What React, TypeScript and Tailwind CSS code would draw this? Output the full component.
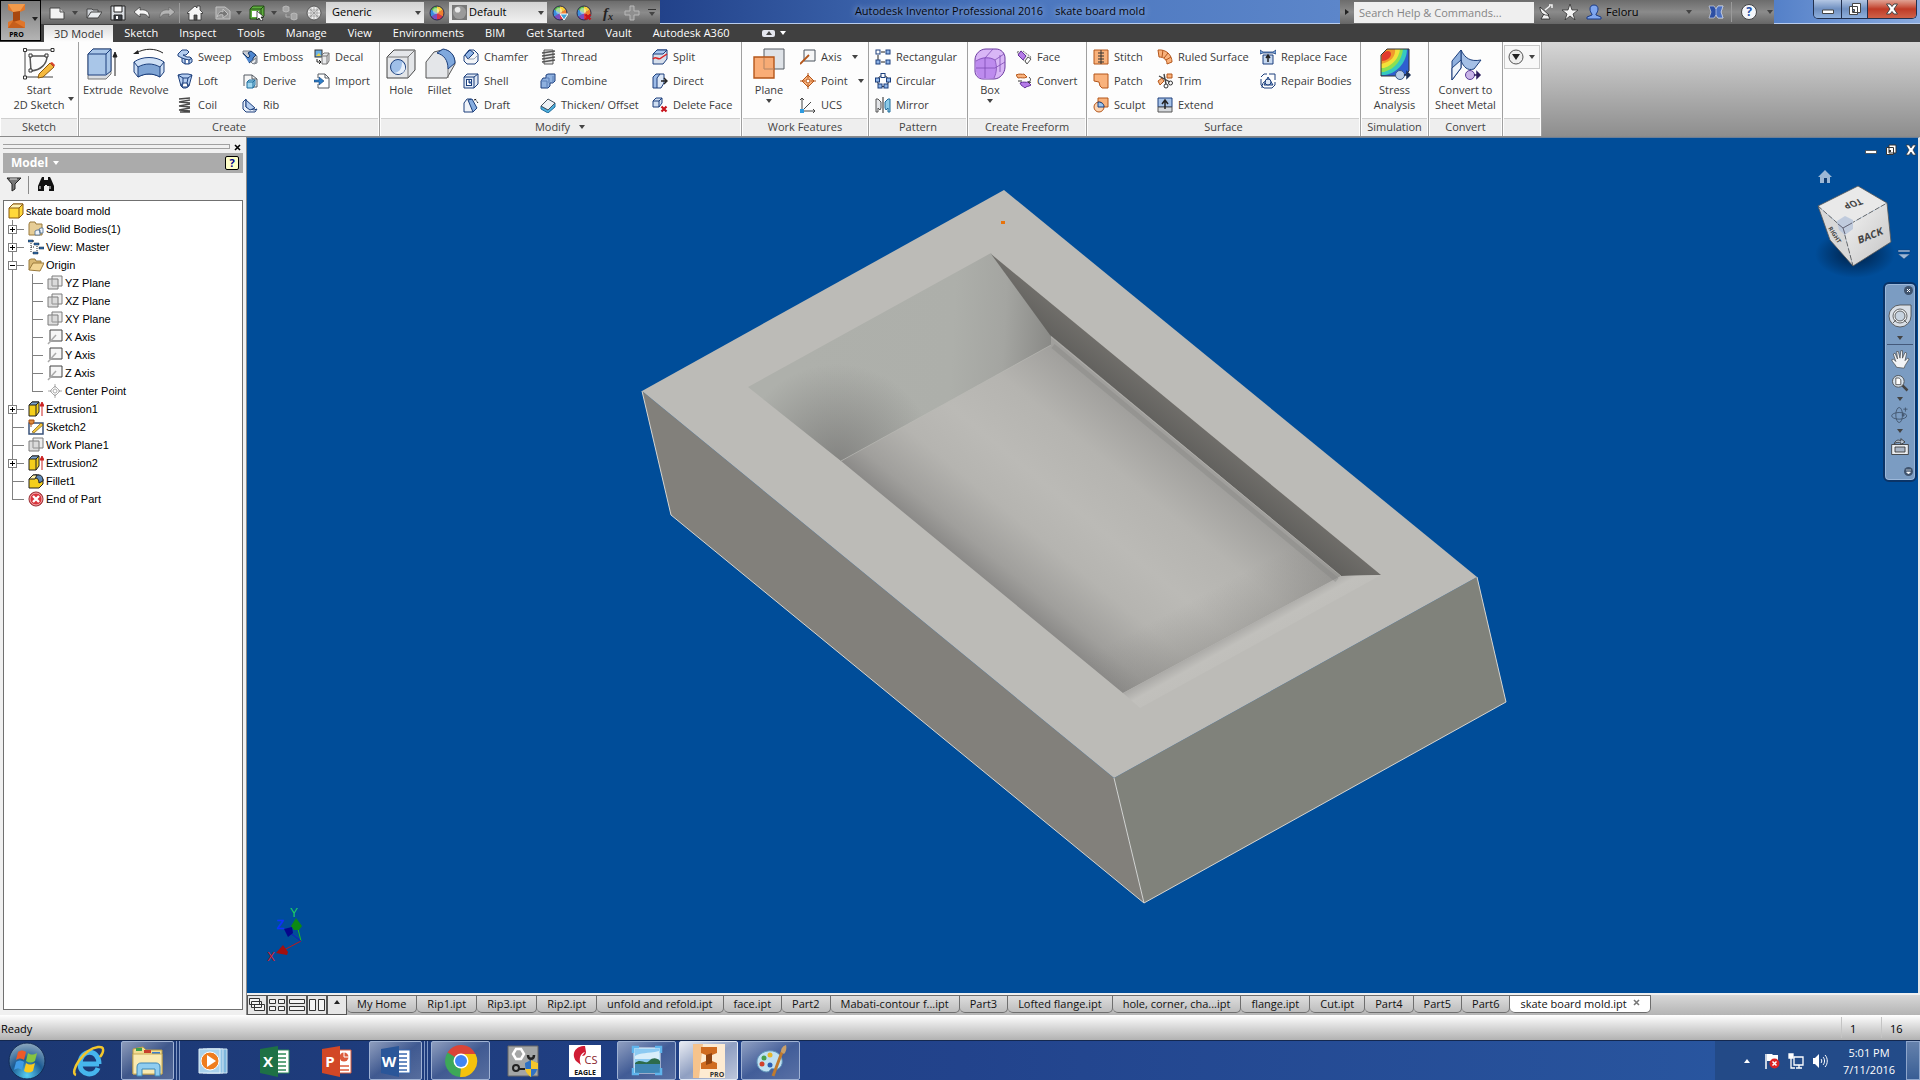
import React from 'react';
import type { ReactNode } from 'react';

const navy = '#1c3f7c';
const sky = '#b4cdf0';
const rust = '#b4561a';
const peach = '#f9b27c';

function Wheel() {
  return (
    <g>
      <path d="M8 8V1a7 7 0 0 1 6 3.5z" fill="#f8d038" />
      <path d="M8 8l6-3.5a7 7 0 0 1 0 7z" fill="#f08030" />
      <path d="M8 8l6 3.5A7 7 0 0 1 8 15z" fill="#d8344a" />
      <path d="M8 8v7a7 7 0 0 1-6-3.5z" fill="#7a4fc0" />
      <path d="M8 8l-6 3.5a7 7 0 0 1 0-7z" fill="#3a8fe0" />
      <path d="M8 8L2 4.5A7 7 0 0 1 8 1z" fill="#5fbf48" />
      <circle cx="8" cy="8" r="7" fill="none" stroke="#2b2b4a" />
      <circle cx="7" cy="6" r="3" fill="#fff" fillOpacity=".45" />
    </g>
  );
}

/* 16px drawings */
const icons: Record<string, ReactNode> = {
  sweep: (
    <g fill={sky} stroke={navy}>
      <path d="M1 5l4-4h5l2 2-3 3H6l4 2h3l2 2v3l-3 2H8l-3-2V9L1 7z" />
      <path d="M5 9l3 1 4 1 3-2M8 10v5M12 11v4" fill="none" />
      <path d="M9 11h2v3H9z" fill="#fff" stroke="none" />
    </g>
  ),
  loft: (
    <g stroke={navy} fill={sky}>
      <path d="M1 2l4-1 6 0 4 1-3 11-3 2H6l-2-2z" />
      <path d="M1 2l5 3h5l4-3M6 5v4l-2 4M11 5l-1 5 2 3" fill="none" />
      <path d="M6 10h4l1 4H5z" fill="#fff" />
    </g>
  ),
  coil: (
    <g stroke="#4a4a4a" fill="none" strokeWidth="1.3">
      <path d="M2 2l11-1M2 5l11-2M2 5l11 1M2 9l11-2M2 9l11 1M2 13l11-2M2 13l11 1M3 15h10" />
    </g>
  ),
  emboss: (
    <g>
      <path d="M1 2h7l7 5v7l-3 1-6-6-5-4z" fill="#c8ccd2" stroke="#7a8089" />
      <path d="M1 4l5 5 2-2-2-3 3-2 5 4-3 3v2l-4 3" fill="#4d86cf" stroke="#163767" />
      <path d="M9 13l5-4v4l-3 2z" fill="#e8eaed" stroke="#7a8089" />
    </g>
  ),
  derive: (
    <g>
      <path d="M2 13V2h8l5 4v8h-3" fill="#f6f6f6" stroke="#555b63" />
      <path d="M10 2v4h5" fill="none" stroke="#555b63" />
      <path d="M5 9l2-2h6v5l-2 3H5z" fill="#9fd6ee" stroke="#1f6c9c" />
      <path d="M5 9h6v6M11 9l2-2" fill="none" stroke="#1f6c9c" />
    </g>
  ),
  rib: (
    <g stroke={navy} fill={sky}>
      <path d="M1 5l3-3v8l8 3 3-1-2 3H4l-3-3z" fill="#e9f0fa" />
      <path d="M4 3l9 8-5 2-4-3z" />
    </g>
  ),
  decal: (
    <g>
      <rect x="1" y="1" width="7" height="7" fill="#6db1e6" stroke="#333" />
      <path d="M2 7l3-3 2 3z" fill="#e8d24b" />
      <path d="M3 10v3h3M5 11l2 2-2 2" fill="none" stroke="#222" />
      <path d="M8 6l2-2h5v8l-2 3H8z" fill="#e9eaec" stroke="#777" />
      <path d="M8 7h5v8M13 7l2-3" fill="none" stroke="#777" />
    </g>
  ),
  import: (
    <g>
      <path d="M4 5V1h7l4 4v10H4v-4" fill="#fff" stroke="#555b63" />
      <path d="M11 1v4h4" fill="none" stroke="#555b63" />
      <path d="M0 7h5V4l5 4-5 4V9H0z" fill="#2e7fc9" stroke="#123e73" strokeWidth=".6" />
    </g>
  ),
  chamfer: (
    <g stroke={navy}>
      <path d="M1 7l5-6h5l4 4v7l-3 3H4l-3-3z" fill="#f3f5f8" />
      <path d="M2 6l5-5 4 3-6 6z" fill="#8fb4e6" />
      <path d="M5 10l6 0 4-4" fill="none" stroke="#9aa5b5" />
    </g>
  ),
  shell: (
    <g stroke={navy}>
      <path d="M1 4l3-3h11v10l-4 4H1z" fill="#dfe8f5" />
      <path d="M1 4h10v11M11 4l4-3" fill="none" />
      <rect x="3.5" y="6.5" width="5" height="6" fill="#fff" />
      <path d="M6 7v3h3" fill="#4d7cc5" />
    </g>
  ),
  draft: (
    <g stroke={navy}>
      <path d="M1 6l3-4h4l4 10-2 3H1z" fill="#f0f3f8" />
      <path d="M5 3l4-1 5 9-4 4z" fill="#86ade0" />
      <path d="M11 3l3-1M12 2l3 4" stroke="#222" strokeDasharray="2 1" />
    </g>
  ),
  thread: (
    <g stroke="#555" fill="#e6e6e6">
      <path d="M4 1h9v14H4z" />
      <path d="M2 4l13-2M2 7l13-2M2 10l13-2M2 13l13-2" strokeWidth="1.4" />
    </g>
  ),
  combine: (
    <g stroke={navy}>
      <path d="M6 2l2-1h7v7l-2 2h-3v3l-2 2H1V8l2-3h3z" fill="#8fb1df" />
      <path d="M6 5l3 0v5M1 8h6v7M13 3v7" fill="none" stroke="#5a7fb8" />
    </g>
  ),
  thicken: (
    <g stroke="#44505e">
      <path d="M1 9l7 4 7-7v4l-7 6-7-4z" fill="#4fb0dd" stroke="#1f6c9c" />
      <path d="M1 9l7-7 7 4-7 7z" fill="#eef1f4" />
    </g>
  ),
  split: (
    <g>
      <path d="M1 5l4-4h10v9l-4 5H1z" fill="#d5deeb" stroke={navy} />
      <path d="M1 5h10l4-4H5z" fill="#a9c6ee" stroke={navy} />
      <path d="M1 10c3-4 5 2 8-1l6-4" fill="none" stroke="#d22" strokeWidth="1.5" />
    </g>
  ),
  direct: (
    <g stroke={navy}>
      <path d="M1 4l3-3h4v11l-3 3H1z" fill="#9dbbe7" />
      <path d="M5 5l3-4h4v9l-3 5H5z" fill="#dce7f6" />
      <path d="M9 8h5M12 5l3 3-3 3" fill="none" stroke="#222" strokeWidth="1.4" />
    </g>
  ),
  deleteFace: (
    <g>
      <path d="M1 4l3-3h6v5l-3 4H1z" fill="#cfdef2" stroke={navy} />
      <path d="M1 4h6v6M7 4l3-3" fill="none" stroke={navy} />
      <path d="M9.5 9.5l5 5M14.5 9.5l-5 5" stroke="#c8141c" strokeWidth="2.2" />
    </g>
  ),
  axis: (
    <g>
      <path d="M4 1h11v11H4z" fill="#f6f7f8" stroke="#4b525c" />
      <path d="M0 15L9 6" stroke={rust} strokeWidth="1.8" />
    </g>
  ),
  point: (
    <g>
      <path d="M8 2l6 6-6 6-6-6z" fill={peach} stroke={rust} />
      <path d="M8 0v5M8 11v5M0 8h5M11 8h5" stroke={rust} />
      <circle cx="8" cy="8" r="2" fill="#fff" stroke={rust} />
    </g>
  ),
  ucs: (
    <g>
      <path d="M2 1v13h13M2 14l9-9M0 3l2-2 2 2M13 12l2 2-2 2" fill="none" stroke="#444" />
      <rect x="0" y="12" width="4" height="4" fill="#2e9be0" />
    </g>
  ),
  rectangular: (
    <g stroke={navy}>
      <path d="M6 3h4M3 6v5M6 13h4" stroke="#222" />
      <rect x="1" y="1" width="4" height="4" fill="#fff" />
      <rect x="11" y="1" width="4" height="4" fill="#8fb4e6" />
      <rect x="1" y="11" width="4" height="4" fill="#8fb4e6" />
      <rect x="11" y="11" width="4" height="4" fill="#8fb4e6" />
    </g>
  ),
  circular: (
    <g stroke={navy}>
      <circle cx="8" cy="8" r="5.5" fill="none" stroke="#222" />
      <rect x="6" y="0.5" width="4" height="4" fill="#fff" />
      <rect x="0.5" y="5" width="4" height="4" fill="#8fb4e6" />
      <rect x="11.5" y="5" width="4" height="4" fill="#8fb4e6" />
      <rect x="3" y="11" width="4" height="4" fill="#8fb4e6" />
      <rect x="9" y="11" width="4" height="4" fill="#8fb4e6" />
    </g>
  ),
  mirror: (
    <g>
      <path d="M1 2h2l3 3v6l-1 2-2-2v4H1z" fill="#e3e5e8" stroke="#555" />
      <path d="M15 2h-2l-3 3v6l1 2 2-2v4h2z" fill="#8ccbe8" stroke="#1f6c9c" />
      <path d="M8 0v16" stroke="#222" />
    </g>
  ),
  face: (
    <g>
      <path d="M1 3l6-1 8 6-4 6-3-2z" fill="#eee" stroke="#777" strokeDasharray="2 1" />
      <path d="M5 2l5 5-3 4-5-5z" fill="#b57be8" stroke="#63309a" />
      <path d="M12 8l3 2-4 5-2-3z" fill="#fff" stroke="#555" />
    </g>
  ),
  convert: (
    <g>
      <path d="M0 2c4-2 6 0 8-1l3 3c-3 2-6 0-9 1z" fill={peach} stroke={rust} />
      <path d="M4 10c4-2 6 0 8-1l3 3c-3 2-5 1-6 3-2-2-4-2-5-5z" fill="#b57be8" stroke="#63309a" />
      <path d="M13 4c2 2 2 3 0 5M12 8l1 2 2-1M2 8h4" fill="none" stroke="#333" />
    </g>
  ),
  stitch: (
    <g>
      <path d="M1 1h14v14H1z" fill={peach} stroke={rust} />
      <path d="M8 1v14" stroke="#333" />
      <path d="M5 4h6M5 7h6M5 10h6M5 13h6" stroke="#333" />
    </g>
  ),
  patch: <path d="M1 1h14v14H9l-2-2-1-4-5-1z" fill={peach} stroke={rust} />,
  sculpt: (
    <g>
      <path d="M5 1h10v9H5z" fill={peach} stroke={rust} />
      <circle cx="6" cy="10" r="5" fill="#fdd3b0" stroke={rust} />
      <path d="M5 5c5 0 6 3 6 5H5z" fill="#9ac4ee" stroke={navy} />
    </g>
  ),
  ruled: (
    <g fill={peach} stroke={rust}>
      <path d="M1 1c8-1 14 5 14 12l-5 2C10 11 7 8 2 8z" />
      <path d="M6 1L5 8M11 4L7 9M14 8l-5 3" fill="none" />
    </g>
  ),
  trim: (
    <g>
      <path d="M10 1h5v4h-5z" fill={peach} stroke={rust} />
      <path d="M1 8l4-3 2 3-4 4z" fill={peach} stroke={rust} />
      <path d="M7 1l2 10M2 3l11 6" stroke="#444" strokeWidth="1.4" />
      <circle cx="9" cy="13" r="2" fill="none" stroke="#333" />
      <circle cx="13.5" cy="10" r="2" fill="none" stroke="#333" />
    </g>
  ),
  extend: (
    <g>
      <path d="M1 1h14v9H1z" fill="#a7c3e8" stroke={navy} />
      <path d="M1 10h14v5H1z" fill="#d4d7db" stroke="#555" />
      <path d="M8 12V4M5 7l3-4 3 4" fill="none" stroke="#222" strokeWidth="1.5" />
    </g>
  ),
  replace: (
    <g>
      <path d="M3 6h10v9H3z" fill="#c6d8f0" stroke={navy} />
      <path d="M0 1l3 2h10l3-2v4l-3-1H3L0 5z" fill="#7ea9de" stroke={navy} strokeWidth=".8" />
      <path d="M8 13V7M6 9l2-3 2 3" fill="none" stroke="#222" strokeWidth="1.5" />
    </g>
  ),
  repair: (
    <g stroke={navy} fill="none">
      <path d="M1 4l3-3h3M9 1h6v6M1 6v6l3 3h8l3-3V9" />
      <path d="M4 12l4-8 5 8z" fill="#a9c6ee" />
      <circle cx="8" cy="9" r="3" fill="#dfe9f7" />
      <path d="M2 15c0-4 1-6 4-7" />
    </g>
  ),
  /* model browser */
  part: (
    <g stroke="#8a5a10">
      <path d="M1 5l4-4h10v10l-4 4H1z" fill="#ffd83a" />
      <path d="M5 1h10l-4 4H1z" fill="#fff3b8" />
      <path d="M11 5v10" fill="none" />
    </g>
  ),
  solids: (
    <g>
      <path d="M1 3l1-2h5l1 2h6v11H1z" fill="#e6cd96" stroke="#9a7a3c" />
      <path d="M7 10l2-1h3v5H7zM11 8l2-1h2v5h-3z" fill="#eef3f9" stroke="#49698f" strokeWidth=".8" />
    </g>
  ),
  views: (
    <g>
      <path d="M1 2h5M3 2v12M3 8h4M9 5v8" stroke="#222" strokeDasharray="1 1" />
      <path d="M0 1h5v2H0zM6 4h5v2H6zM11 8h5v2h-5zM5 13h5v2H5z" fill="#2f6cae" stroke="#123" strokeWidth=".5" />
    </g>
  ),
  folder: (
    <g stroke="#9a7a3c">
      <path d="M1 13V3l2-1h4l1 2h5v3" fill="#d9b873" />
      <path d="M1 13l4-7h11l-4 8z" fill="#f2d594" />
    </g>
  ),
  plane: (
    <g stroke="#7c7c7c">
      <path d="M5 1h10v10H5z" fill="#ededed" />
      <path d="M1 4h10v10H1z" fill="#d4d4d4" fillOpacity=".8" />
      <path d="M5 4v7h6" fill="none" stroke="#9c9c9c" />
    </g>
  ),
  axisGray: (
    <g>
      <path d="M3 1h12v11H3z" fill="#f6f6f6" stroke="#444" />
      <path d="M1 15L9 6" stroke="#aaa" strokeWidth="1.5" />
    </g>
  ),
  centerPoint: (
    <g stroke="#aaa" fill="none">
      <path d="M8 3l5 5-5 5-5-5zM8 1v4M8 11v4M1 8h4M11 8h4" />
      <circle cx="8" cy="8" r="2" />
    </g>
  ),
  extrusion: (
    <g>
      <path d="M1 4l3-3h7v10l-3 4H1z" fill="#f5cf1c" stroke="#222" />
      <path d="M4 1h7L8 4H1z" fill="#7ea6cf" stroke="#222" />
      <path d="M8 4v11" fill="none" stroke="#222" />
      <path d="M14 15V2M12 5l2-4 2 4z" stroke="#c22" fill="#c22" />
    </g>
  ),
  sketch: (
    <g>
      <path d="M1 4h14v11H1z" fill="#fff" stroke="#39527a" strokeWidth="1.5" />
      <path d="M4 13l9-9 2 2-9 8z" fill="#f3c63e" stroke="#7a5a12" strokeWidth=".7" />
      <path d="M1 1h5v2L5 5H2L1 3zM3 5v3" fill="#e08a3c" stroke="#a24d12" />
    </g>
  ),
  filletPart: (
    <g stroke="#222">
      <path d="M1 6l4-4h6l4 4v5l-4 4H1z" fill="#f5cf1c" />
      <path d="M7 2h4c3 0 4 3 4 6l-4 2c0-3-1-5-4-5z" fill="#5d86b5" />
      <path d="M1 6h6l2-4H5z" fill="#fff2a8" />
    </g>
  ),
  end: (
    <g>
      <circle cx="8" cy="8" r="7" fill="#d8343c" stroke="#8c2026" />
      <circle cx="8" cy="8" r="6" fill="none" stroke="#f3b0b2" />
      <path d="M5 5l6 6M11 5l-6 6" stroke="#fff" strokeWidth="2.4" />
    </g>
  ),
  /* quick access */
  newFile: (
    <g>
      <path d="M1 3h10l4 4v7H1z" fill="#f2f2f2" stroke="#444" />
      <path d="M11 3v4h4" fill="#ccc" stroke="#555" />
    </g>
  ),
  open: (
    <g stroke="#444">
      <path d="M1 13V4h5l1 1h5v3" fill="#cfd3d8" />
      <path d="M1 13l4-6h11l-4 6z" fill="#e9ecef" />
    </g>
  ),
  save: (
    <g stroke="#222">
      <path d="M1 1h14v14H1z" fill="#d9dde2" />
      <path d="M4 1h8v6H4z" fill="#fff" />
      <path d="M4 10h8v5H4z" fill="#3a3f46" />
      <path d="M6 11h2v3H6z" fill="#fff" stroke="none" />
    </g>
  ),
  undo: <path d="M0 7l6-5v3c6-1 10 2 9 8-2-4-5-4-9-4v3z" fill="#f6f6f6" stroke="#333" strokeWidth=".7" />,
  redo: <path d="M16 7l-6-5v3C4 4 0 7 1 13c2-4 5-4 9-4v3z" fill="#b4b4b4" stroke="#666" strokeWidth=".7" />,
  home: (
    <g fill="#f6f6f6" stroke="#333" strokeWidth=".8">
      <path d="M0 8l8-7 2 2V1h3v4l3 3-1 1-1-1v7H2V8L1 9z" />
      <path d="M7 10h3v5H7z" fill="#555" />
    </g>
  ),
  update: (
    <g fill="#9a9a9a" stroke="#c2c2c2">
      <path d="M1 2h9l5 4v8H1z" />
      <path d="M2 12c2-6 4-6 6-5V4l5 5-5 4v-3c-2-1-4 0-6 2z" fill="#777" />
    </g>
  ),
  select: (
    <g>
      <path d="M1 4l3-3h11v10l-3 3H1z" fill="#5fae3e" stroke="#224d14" />
      <path d="M1 4h11v10M12 4l3-3" fill="none" stroke="#224d14" />
      <path d="M3 6h7v6H3z" fill="#fff" />
      <path d="M8 6v9l2-2 2 3 2-1-2-3h3z" fill="#fff" stroke="#111" strokeWidth=".7" />
    </g>
  ),
  link: (
    <g fill="#a5a5a5" stroke="#c6c6c6" strokeWidth=".7">
      <path d="M1 2l3-1 3 1v4L4 7 1 6zM9 9l3-1 3 1v5l-3 1-3-1z" />
      <path d="M4 9v3h4" fill="none" />
    </g>
  ),
  texture: (
    <g>
      <circle cx="8" cy="8" r="7" fill="#f0f0f0" stroke="#555" />
      <path d="M2 5h12M1 8h14M2 11h12M5 2v12M8 1v14M11 2v12M3 3l10 10M13 3L3 13" stroke="#8a8a8a" strokeWidth=".6" />
    </g>
  ),
  wheel: <Wheel />,
  wheelApply: (
    <g>
      <Wheel />
      <path d="M8 9h8l-4 6z" fill="#3fa2d6" stroke="#fff" />
    </g>
  ),
  wheelClear: (
    <g>
      <Wheel />
      <path d="M9.5 9.5l5 5M14.5 9.5l-5 5" stroke="#c8141c" strokeWidth="2.4" />
    </g>
  ),
  plus: <path d="M6 1h4v5h5v4h-5v5H6v-5H1V6h5z" fill="#8f8f8f" stroke="#b8b8b8" />,
  satellite: (
    <g fill="#f2f2f2" stroke="#222" strokeWidth=".8">
      <path d="M2 3c0 6 4 9 9 8zM6 10l-3 5h9l-2-4" />
      <path d="M7 6l5-4M11 1h3v3" fill="none" stroke="#f2f2f2" strokeWidth="1.5" />
    </g>
  ),
  star: <path d="M8 0l2 6h6l-5 4 2 6-5-4-5 4 2-6-5-4h6z" fill="#f4f4f4" stroke="#333" strokeWidth=".8" />,
  user: <path d="M8 1c3 0 4 2 4 4s-1 4-2 5v1l5 2v2H1v-2l5-2v-1C5 9 4 7 4 5s1-4 4-4z" fill="#7fa6ef" stroke="#1a3a86" />,
  exchange: (
    <g stroke="#dfe4f0" strokeWidth=".6">
      <path d="M1 2h5l2 3 2-3h5l-2 6 2 6h-5l-2-3-2 3H1l2-6z" fill="#2d4fa3" />
      <path d="M8 5l2-3h5l-2 6 2 6h-5l-2-3V5z" fill="#4a6fc0" />
    </g>
  ),
  help: (
    <g>
      <circle cx="8" cy="8" r="7.5" fill="#f4f6fa" stroke="#444" />
      <text x="8" y="12" textAnchor="middle" fontSize="12" fontWeight="700" fill="#2450a8" fontFamily="Open Sans">?</text>
    </g>
  ),
  flag: (
    <g>
      <path d="M2 1v15" stroke="#fff" strokeWidth="1.5" />
      <path d="M3 1h5l1 1h5v7H9L8 8H3z" fill="#fff" />
      <circle cx="10.5" cy="10.5" r="5" fill="#d22" />
      <path d="M8.5 8.5l4 4M12.5 8.5l-4 4" stroke="#fff" strokeWidth="1.5" />
    </g>
  ),
  network: (
    <g stroke="#fff" fill="none" strokeWidth="1.3">
      <path d="M6 4h9v8H6zM8 15h6M11 12v3M3 5v10h4" />
      <path d="M1 1h4v4H1z" fill="#fff" />
    </g>
  ),
  sound: (
    <g>
      <path d="M1 5h2l4-4v14l-4-4H1z" fill="#fff" />
      <path d="M9 6c1 1 1 3 0 4M11 4c2 2 2 6 0 8M13 2c3 3 3 9 0 12" fill="none" stroke="#fff" />
    </g>
  ),
  filter: (
    <g stroke="#222">
      <path d="M1 2h14l-6 6v5l-3 2V8z" fill="#777" />
      <path d="M4 3h7" stroke="#ddd" />
    </g>
  ),
  binoculars: (
    <g>
      <path d="M3 3l1-2h2v3h4V1h2l1 2 3 7v5h-5v-5H9V9H7v1H6v5H0v-5z" fill="#111" />
      <path d="M2 10v3M12 10v3" stroke="#eee" />
    </g>
  ),
};

/* 32px drawings */
const bigIcons: Record<string, ReactNode> = {
  start: (
    <g>
      <path d="M2 2h28M2 2v27h28" fill="none" stroke="#444" />
      <path d="M7 8h17c0 8-6 14-16 15z" fill="#fafafa" stroke="#555" strokeWidth="1.5" />
      <path d="M.5.5h3v3h-3zM28 .5h3v3h-3zM.5 28h3v3h-3zM6 6h3v3H6zM22 6h3v3h-3zM6 21h3v3H6z" fill="#fff" stroke="#333" />
      <path d="M16 26l11-11 4 4-11 10-5 1z" fill="#f5b93e" stroke="#8a5a10" />
      <path d="M27 15l4 4 1-2-3-3z" fill="#d8442c" />
    </g>
  ),
  extrude: (
    <g>
      <path d="M1 6l5-5h18v25l-5 5H1z" fill="#d9dde2" stroke="#777" />
      <path d="M1 6l5-5h18v22l-5 4H1z" fill="#a9c6e8" stroke={navy} />
      <path d="M19 6v20M19 6l5-5M1 6h18" fill="none" stroke={navy} />
      <path d="M28 28V6M26 9l2-5 2 5z" stroke="#222" fill="#222" />
    </g>
  ),
  revolve: (
    <g>
      <path d="M1 14c8-6 22-6 30 0v10l-4 5c-7-4-15-4-22 0l-4-5z" fill="#cfe0f5" stroke={navy} />
      <path d="M5 19c7-4 15-4 22 0v10c-7-4-15-4-22 0z" fill="#7fa4d4" stroke={navy} />
      <path d="M1 14l4 5M31 14l-4 5" stroke={navy} />
      <path d="M3 5C12 0 22 0 30 5" fill="none" stroke="#222" />
      <path d="M0 6l5-4 1 4z" fill="#222" />
    </g>
  ),
  hole: (
    <g>
      <path d="M2 9l7-7h21v20l-7 8H2z" fill="#e4e6e9" stroke="#444" />
      <path d="M2 9h21v21M23 9l7-7" fill="none" stroke="#777" />
      <circle cx="13" cy="19" r="7.5" fill="#9fbfe8" stroke={navy} />
      <path d="M8 25c6 0 9-4 9-11 5 4 4 11-3 12z" fill="#e6effb" />
    </g>
  ),
  fillet: (
    <g>
      <path d="M2 14l8-10 8-2h4c6 2 9 7 9 14l-8 14H2z" fill="#e4e6e9" stroke="#555" />
      <path d="M13 5l6-4c7 1 12 6 12 14l-7 6c0-9-4-14-11-16z" fill="#7fa8dd" stroke={navy} />
      <path d="M24 21v9" stroke="#777" />
    </g>
  ),
  plane: (
    <g>
      <path d="M11 1h20v20H11z" fill="#dfe3e8" stroke="#555b63" />
      <path d="M1 9h20v21H1z" fill="#f9a468" fillOpacity=".9" stroke={rust} strokeWidth="1.4" />
      <path d="M11 10v11h10" fill="none" stroke="#b98a6a" />
    </g>
  ),
  box: (
    <g>
      <path d="M1 12c0-6 5-11 11-11h10c5 0 9 4 9 9v9c0 6-5 12-11 12H9c-5 0-8-4-8-8z" fill="#d9b6f6" stroke="#6b3aa0" />
      <path d="M2 13c6-5 14-5 19-1 2 6 2 12-1 18-6 1-10 1-15 0-4-6-4-12-3-17z" fill="#bd8bee" />
      <path d="M2 20h19l10-6M11 10v20M21 12c2 6 2 12-1 18M2 13c6-4 14-4 19-1l9-6M11 10l8-9M26 7v17" fill="none" stroke="#7f4cb4" strokeWidth=".8" />
    </g>
  ),
  stress: (
    <g>
      <path d="M2 7l6-6h22v22l-5 5H2z" fill="#2f5fd0" />
      <path d="M2 7l6-6h20c0 12-9 24-22 26H2z" fill="#35c8c0" />
      <path d="M2 7l6-6h16c-1 11-8 20-19 23H2z" fill="#8be052" />
      <path d="M2 7l6-6h13c-1 9-7 16-16 19H2z" fill="#f3e13a" />
      <path d="M2 7l6-6h8c1 7-4 13-14 15z" fill="#f19a2c" />
      <path d="M3 7c3-5 9-5 9-1s-5 7-9 7z" fill="#e23a2c" />
      <path d="M2 7l6-6h22v22l-5 5H2z" fill="none" stroke="#333" />
      <circle cx="21" cy="27" r="4.500" fill="#b8cce6" stroke="#3a5a88" />
      <path d="M25 27h4M28 24l3 3-3 3z" stroke="#1b2f55" strokeWidth="1.5" fill="#1b2f55" />
    </g>
  ),
  sheet: (
    <g>
      <path d="M11 2c4 8 9 12 20 10l-7 9c-7 2-10-2-13-8z" fill="#a5c0e6" stroke={navy} />
      <path d="M2 13l9-11v18l-9 12z" fill="#8fb0de" stroke={navy} />
      <path d="M2 20l9-8v8l-9 12z" fill="#eef4fb" stroke={navy} />
      <circle cx="20" cy="27" r="4.500" fill="#c9b4e8" stroke="#5a3c96" />
      <path d="M24 27h4M27 24l3 3-3 3z" stroke="#2e1d5c" strokeWidth="1.5" fill="#2e1d5c" />
    </g>
  ),
};

const Icon = ({ name }: { name: string }) => (
  <svg className="size-4 shrink-0" viewBox="0 0 16 16" aria-hidden="true">
    {icons[name]}
  </svg>
);

const Caret = ({ className = 'text-[#444]' }: { className?: string }) => (
  <svg className={`h-1 w-2 shrink-0 ${className}`} viewBox="0 0 8 4" aria-hidden="true">
    <path d="M1 0h6L4 4z" fill="currentColor" />
  </svg>
);

const CmdButton = ({ icon, label, menu }: { icon: string; label: string; menu?: boolean }) => (
  <button className="flex h-6 items-center gap-[5px] pl-[5px] whitespace-nowrap">
    <Icon name={icon} />
    <span>{label}</span>
    {menu && <span className="pl-1"><Caret /></span>}
  </button>
);

const Column = ({ width = '', items }: { width?: string; items: [string, string, boolean?][] }) => (
  <div className={`flex shrink-0 flex-col pt-[3px] ${width}`}>
    {items.map(([icon, label, menu]) => (
      <CmdButton key={label} icon={icon} label={label} menu={menu} />
    ))}
  </div>
);

const BigButton = ({ icon, label, width, menu }: { icon: string; label: string; width: string; menu?: boolean }) => (
  <button className={`flex shrink-0 flex-col items-center pt-[6px] leading-[15px] ${width}`}>
    <svg className="size-8" viewBox="0 0 32 32" aria-hidden="true">{bigIcons[icon]}</svg>
    <span className="pt-[2px] whitespace-pre">{label}</span>
    {menu && <span className="flex h-2 items-center"><Caret /></span>}
  </button>
);

const Panel = ({ title, width, menu, children }: { title: string; width: string; menu?: boolean; children?: ReactNode }) => (
  <section className={`flex shrink-0 flex-col border-r border-[#a0a0a0] bg-[#fdfdfd] px-px ${width}`}>
    <div className="flex h-[76px]">{children}</div>
    <div className="flex h-[18px] items-center justify-center gap-2 border-t border-[#cfcfcf] bg-[#eeeeee] pb-px text-[#444]">
      {title}
      {menu && <Caret />}
    </div>
  </section>
);

const Divider = () => <span className="h-5 w-px shrink-0 bg-[#9a9a9a]" />;

const ToolButton = ({ icon, label, className = 'w-[25px]' }: { icon: string; label: string; className?: string }) => (
  <button aria-label={label} className={`flex h-full shrink-0 items-center justify-center ${className}`}>
    <Icon name={icon} />
  </button>
);

const Combo = ({ label, value, ball }: { label: string; value: string; ball?: boolean }) => (
  <label className="relative flex h-[21px] w-[98px] shrink-0 items-center bg-linear-to-b from-[#d2d2d2] to-[#f1f1f1] text-black">
    {ball && (
      <svg className="absolute left-[3px] size-[15px]" viewBox="0 0 16 16" aria-hidden="true">
        <rect width="16" height="16" fill="#777" />
        <circle cx="8" cy="8" r="7" fill="#9a9a9a" />
        <circle cx="6" cy="5" r="3" fill="#e8e8e8" />
      </svg>
    )}
    <select aria-label={label} className={`h-full w-full appearance-none outline-none ${ball ? 'pl-5' : 'pl-[6px]'}`}>
      <option>{value}</option>
    </select>
    <span className="pointer-events-none absolute right-[2px]"><Caret /></span>
  </label>
);

const TitleBar = () => (
  <header className="flex h-6 items-stretch bg-[#404040] text-[11px]">
    <div className="flex shrink-0 items-center border-t border-[#5a5a5a] bg-linear-to-b from-[#6c6c6c] via-[#8b8b8b] to-[#666] pl-11">
      <ToolButton icon="newFile" label="New" />
      <span className="flex w-3 justify-center"><Caret /></span>
      <ToolButton icon="open" label="Open" />
      <ToolButton icon="save" label="Save" className="w-6" />
      <ToolButton icon="undo" label="Undo" className="w-6" />
      <ToolButton icon="redo" label="Redo" />
      <Divider />
      <ToolButton icon="home" label="Home" className="w-[30px]" />
      <ToolButton icon="update" label="Update" />
      <span className="flex w-2 justify-center"><Caret /></span>
      <ToolButton icon="select" label="Select" className="w-[27px]" />
      <span className="flex w-2 justify-center"><Caret /></span>
      <ToolButton icon="link" label="Links" className="w-6" />
      <ToolButton icon="texture" label="Material" className="w-6" />
      <Combo label="Material" value="Generic" />
      <ToolButton icon="wheel" label="Appearance browser" />
      <Combo label="Appearance" value="Default" ball />
      <ToolButton icon="wheelApply" label="Adjust" />
      <ToolButton icon="wheelClear" label="Clear" className="w-6" />
      <button aria-label="Parameters" className="w-6 font-['Liberation_Serif',serif] text-[15px] leading-5 font-bold text-[#222] italic">
        f<sub className="text-[10px]">x</sub>
      </button>
      <ToolButton icon="plus" label="Add" className="w-6" />
      <button aria-label="Customize" className="flex w-4 flex-col items-center gap-[2px]">
        <span className="h-px w-2 bg-[#333]" />
        <Caret />
      </button>
    </div>
    <h1 className="flex min-w-0 flex-1 items-center justify-center gap-3 overflow-hidden border-b border-[#b9cdee] bg-linear-to-r from-[#22428a] via-[#4a75bd] to-[#5c86ca] whitespace-nowrap text-[#05070c]">
      <span className="text-shadow-[0_0_6px_#c6d8f5]">Autodesk Inventor Professional 2016</span>
      <span className="text-shadow-[0_0_6px_#c6d8f5]">skate board mold</span>
    </h1>
    <div className="flex w-[434px] shrink-0 items-center bg-linear-to-b from-[#6c6c6c] via-[#8b8b8b] to-[#666]">
      <button aria-label="Collapse search" className="flex w-[14px] justify-center">
        <span className="-rotate-90"><Caret className="text-[#222]" /></span>
      </button>
      <input aria-label="Search" placeholder="Search Help &amp; Commands..." className="h-[21px] w-[180px] bg-[#efefef] pl-[5px] text-black outline-none placeholder:text-[#858585]" />
      <ToolButton icon="satellite" label="Communication Center" className="w-6" />
      <ToolButton icon="star" label="Favorites" className="w-6" />
      <button className="flex flex-1 items-center gap-1 pl-1 text-black">
        <Icon name="user" />
        <span className="flex-1 text-left">Feloru</span>
        <Caret />
      </button>
      <span className="w-2" />
      <ToolButton icon="exchange" label="Exchange Apps" className="w-[30px]" />
      <Divider />
      <ToolButton icon="help" label="Help" className="w-[34px]" />
      <span className="flex w-2 justify-start"><Caret /></span>
    </div>
    <div className="flex w-[146px] shrink-0 items-start justify-end border-b border-[#b9cdee] bg-linear-to-r from-[#5480c8] to-[#8aabdf] pr-[3px]">
      <div className="flex h-[19px] overflow-hidden rounded-b-[5px] border border-t-0 border-[#22304e]">
        <button aria-label="Minimize" className="flex w-7 items-center justify-center border-r border-[#22304e] bg-linear-to-b from-[#b4c7e4] via-[#6f8fc0] to-[#8fb0dd]">
          <svg className="size-4" viewBox="0 0 16 16"><path d="M2.5 9h11v3.500h-11z" fill="#fff" stroke="#444" /></svg>
        </button>
        <button aria-label="Restore" className="flex w-[26px] items-center justify-center border-r border-[#22304e] bg-linear-to-b from-[#b4c7e4] via-[#6f8fc0] to-[#8fb0dd]">
          <svg className="size-4" viewBox="0 0 16 16"><path d="M5.500 2.500h8v9h-8zM2.500 5.500h8v8h-8z" fill="#fff" stroke="#444" /><path d="M5.500 8.500h2v2h-2z" fill="#6f8fc0" stroke="#444" /></svg>
        </button>
        <button aria-label="Close" className="flex w-12 items-center justify-center bg-linear-to-b from-[#e0a294] via-[#bf3a26] to-[#cf6148]">
          <svg className="size-4" viewBox="0 0 16 16"><path d="M2.500 3h3.500l2 2.500L10 3h3.500l-3.500 5 3.500 5H10l-2-2.500L6 13H2.500L6 8z" fill="#fff" stroke="#444" /></svg>
        </button>
      </div>
    </div>
  </header>
);

const ribbonTabs = ['Sketch', 'Inspect', 'Tools', 'Manage', 'View', 'Environments', 'BIM', 'Get Started', 'Vault', 'Autodesk A360'];

const RibbonTabs = () => (
  <nav className="flex h-[18px] items-stretch gap-px bg-[#404040] pl-11 text-[11px] leading-[15px] text-white">
    <button className="mt-px bg-linear-to-b from-[#dcdcdc] to-[#fdfdfd] px-[10px] text-[#333]">3D Model</button>
    {ribbonTabs.map((tab) => (
      <button key={tab} className="px-[10px] pb-px">{tab}</button>
    ))}
    <button aria-label="Minimize ribbon" className="ml-[22px] flex items-center gap-1">
      <span className="flex h-[7px] w-[13px] items-center justify-center rounded-xs bg-[#e4e6ee]">
        <span className="rotate-180"><Caret /></span>
      </span>
      <Caret className="text-white" />
    </button>
  </nav>
);

const AppButton = () => (
  <button className="absolute top-0 left-0 flex h-[41px] w-[41px] items-start border border-black bg-linear-to-b from-[#7c7c7c] to-[#b4b4b4] pl-[6px]">
    <span className="flex flex-col items-center">
      <svg className="h-[29px] w-[19px]" viewBox="0 0 19 29" aria-hidden="true">
        <path d="M1 3h17v6l-5 2v8l5 2v6H1v-6l5-2v-8L1 9z" fill="#e0762a" />
        <path d="M6 11l7-2v10l-7 2z" fill="#a8480f" />
        <path d="M1 3l17 0-5 7-7 1z" fill="#f29a4a" />
        <path d="M1 27l5-7 12 7z" fill="#c65f1c" />
      </svg>
      <span className="text-[7px] leading-[9px] font-bold">PRO</span>
    </span>
    <span className="flex h-9 items-center pl-[5px]"><Caret className="text-[#222]" /></span>
  </button>
);

const Ribbon = () => (
  <div className="flex h-[95px] overflow-hidden border-b border-[#8a8a8a] bg-linear-to-b from-[#d6d6d6] to-[#8e8e8e] text-[11px] text-[#3b3b3b]">
    <Panel title="Sketch" width="w-[79px]">
      <div className="relative flex flex-1 justify-center">
        <BigButton icon="start" label={'Start\n2D Sketch'} width="w-[68px]" />
        <span className="absolute top-[55px] right-[2px]"><Caret /></span>
      </div>
    </Panel>
    <Panel title="Create" width="w-[301px]">
      <BigButton icon="extrude" label="Extrude" width="w-[46px]" />
      <BigButton icon="revolve" label="Revolve" width="w-[46px]" />
      <Column width="w-[65px]" items={[['sweep', 'Sweep'], ['loft', 'Loft'], ['coil', 'Coil']]} />
      <Column width="w-[72px]" items={[['emboss', 'Emboss'], ['derive', 'Derive'], ['rib', 'Rib']]} />
      <Column items={[['decal', 'Decal'], ['import', 'Import']]} />
    </Panel>
    <Panel title="Modify" width="w-[362px]" menu>
      <BigButton icon="hole" label="Hole" width="w-10" />
      <BigButton icon="fillet" label="Fillet" width="w-[37px]" />
      <Column width="w-[77px]" items={[['chamfer', 'Chamfer'], ['shell', 'Shell'], ['draft', 'Draft']]} />
      <Column width="w-[112px]" items={[['thread', 'Thread'], ['combine', 'Combine'], ['thicken', 'Thicken/ Offset']]} />
      <Column items={[['split', 'Split'], ['direct', 'Direct'], ['deleteFace', 'Delete Face']]} />
    </Panel>
    <Panel title="Work Features" width="w-[127px]">
      <BigButton icon="plane" label="Plane" width="w-[52px]" menu />
      <Column items={[['axis', 'Axis', true], ['point', 'Point', true], ['ucs', 'UCS']]} />
    </Panel>
    <Panel title="Pattern" width="w-[99px]">
      <Column items={[['rectangular', 'Rectangular'], ['circular', 'Circular'], ['mirror', 'Mirror']]} />
    </Panel>
    <Panel title="Create Freeform" width="w-[119px]">
      <BigButton icon="box" label="Box" width="w-[42px]" menu />
      <Column items={[['face', 'Face'], ['convert', 'Convert']]} />
    </Panel>
    <Panel title="Surface" width="w-[274px]">
      <Column width="w-16" items={[['stitch', 'Stitch'], ['patch', 'Patch'], ['sculpt', 'Sculpt']]} />
      <Column width="w-[103px]" items={[['ruled', 'Ruled Surface'], ['trim', 'Trim'], ['extend', 'Extend']]} />
      <Column items={[['replace', 'Replace Face'], ['repair', 'Repair Bodies']]} />
    </Panel>
    <Panel title="Simulation" width="w-[68px]">
      <BigButton icon="stress" label={'Stress\nAnalysis'} width="w-[65px]" />
    </Panel>
    <Panel title="Convert" width="w-[74px]">
      <BigButton icon="sheet" label={'Convert to\nSheet Metal'} width="w-[71px]" />
    </Panel>
    <Panel title="" width="w-[39px]">
      <button aria-label="Ribbon options" className="mt-[3px] flex h-6 w-full items-center justify-center gap-1 border border-[#c8c8c8] bg-[#f8f8f8]">
        <svg className="size-4" viewBox="0 0 16 16" aria-hidden="true">
          <circle cx="8" cy="8" r="7" fill="#eee" stroke="#555" />
          <path d="M4 5h8l-4 6z" fill="#222" />
        </svg>
        <Caret />
      </button>
    </Panel>
  </div>
);

type Node = { label: string; icon: string; level: number; box?: '+' | '-'; last?: boolean };

const tree: Node[] = [
  { label: 'skate board mold', icon: 'part', level: 0 },
  { label: 'Solid Bodies(1)', icon: 'solids', level: 1, box: '+' },
  { label: 'View: Master', icon: 'views', level: 1, box: '+' },
  { label: 'Origin', icon: 'folder', level: 1, box: '-' },
  { label: 'YZ Plane', icon: 'plane', level: 2 },
  { label: 'XZ Plane', icon: 'plane', level: 2 },
  { label: 'XY Plane', icon: 'plane', level: 2 },
  { label: 'X Axis', icon: 'axisGray', level: 2 },
  { label: 'Y Axis', icon: 'axisGray', level: 2 },
  { label: 'Z Axis', icon: 'axisGray', level: 2 },
  { label: 'Center Point', icon: 'centerPoint', level: 2, last: true },
  { label: 'Extrusion1', icon: 'extrusion', level: 1, box: '+' },
  { label: 'Sketch2', icon: 'sketch', level: 1 },
  { label: 'Work Plane1', icon: 'plane', level: 1 },
  { label: 'Extrusion2', icon: 'extrusion', level: 1, box: '+' },
  { label: 'Fillet1', icon: 'filletPart', level: 1 },
  { label: 'End of Part', icon: 'end', level: 1, last: true },
];

const TreeRow = ({ node }: { node: Node }) => (
  <li className={`flex h-[18px] items-center gap-[2px] ${node.level === 0 ? 'pl-1' : ''}`}>
    <span className="flex items-center">
      {node.level > 0 && (
        <svg className="h-[18px] w-6" viewBox="0 0 24 18" aria-hidden="true" shapeRendering="crispEdges">
          <path d={`M8.5 0V${node.level === 1 && node.last ? 9 : 18}`} stroke="#808080" />
          {node.level === 1 && <path d="M8 9.5h12" stroke="#808080" />}
          {node.box && <path d="M4.5 5.5h8v8h-8z" fill="#fff" stroke="#808080" />}
          {node.box && <path d="M6 9.5h5" stroke="#000" />}
          {node.box === '+' && <path d="M8.5 7v5" stroke="#000" />}
        </svg>
      )}
      {node.level === 2 && (
        <svg className="h-[18px] w-[19px]" viewBox="0 0 19 18" aria-hidden="true" shapeRendering="crispEdges">
          <path d={`M4.5 0V${node.last ? 9 : 18}M4 9.5h11`} stroke="#808080" />
        </svg>
      )}
      <Icon name={node.icon} />
    </span>
    {node.label}
  </li>
);

const ModelBrowser = () => (
  <aside className="flex w-[246px] shrink-0 flex-col bg-[#f0f0f0] px-[3px] pt-1 pb-[5px] text-black">
    <div className="flex h-3 items-center">
      <div className="mb-px h-[5px] flex-1 border-y border-r border-[#a0a0a0]" />
      <button aria-label="Close panel" className="flex w-[13px] justify-end pr-[2px]">
        <svg className="size-[7px]" viewBox="0 0 7 7"><path d="M1 1l5 5M6 1L1 6" stroke="#000" strokeWidth="1.600" /></svg>
      </button>
    </div>
    <div className="flex h-5 items-center bg-[#ababab] pr-1 pl-2 text-[12px] font-bold text-white">
      <button className="flex flex-1 items-center gap-1">Model <Caret className="text-white" /></button>
      <button aria-label="Help" className="flex size-[14px] items-center justify-center rounded-xs border border-black bg-[#ffffc8] text-[11px] leading-3 text-[#00008b]">?</button>
    </div>
    <div className="flex h-[27px] items-start pt-[3px] pl-[3px]">
      <button aria-label="Filter"><Icon name="filter" /></button>
      <span className="ml-[6px] h-[18px] w-px bg-[#8a8a8a]" />
      <button aria-label="Find" className="pl-[9px]"><Icon name="binoculars" /></button>
    </div>
    <ul className="flex-1 border border-[#707070] bg-white pt-px font-['Liberation_Sans',sans-serif] text-[11px] whitespace-nowrap">
      {tree.map((node) => <TreeRow key={node.label} node={node} />)}
    </ul>
  </aside>
);

const Mold = () => (
  <svg className="absolute top-[51px] left-[394px] h-[716px] w-[866px]" viewBox="642 189 866 716" role="img" aria-label="Skate board mold">
    <defs>
      <linearGradient id="floor" gradientUnits="userSpaceOnUse" x1="983" y1="577" x2="1125" y2="404">
        <stop offset="0" stopColor="#8b8a88" />
        <stop offset=".1" stopColor="#a09f9c" />
        <stop offset=".3" stopColor="#b5b4b0" />
        <stop offset=".5" stopColor="#bbbab6" />
        <stop offset=".75" stopColor="#b5b4b0" />
        <stop offset="1" stopColor="#a09f9c" />
      </linearGradient>
      <linearGradient id="floorEnd" gradientUnits="userSpaceOnUse" x1="1233" y1="634" x2="1210" y2="591">
        <stop offset="0" stopColor="#8a8986" stopOpacity=".4" />
        <stop offset="1" stopColor="#8a8986" stopOpacity="0" />
      </linearGradient>
      <linearGradient id="backWall" gradientUnits="userSpaceOnUse" x1="800" y1="330" x2="1056" y2="344">
        <stop offset="0" stopColor="#aeb0ab" />
        <stop offset=".6" stopColor="#adafaa" />
        <stop offset=".8" stopColor="#a4a5a1" />
        <stop offset="1" stopColor="#878784" />
      </linearGradient>
      <radialGradient id="backWallLow" gradientUnits="userSpaceOnUse" cx="838" cy="464" r="100">
        <stop offset="0" stopColor="#7e7e7c" stopOpacity=".9" />
        <stop offset="1" stopColor="#7e7e7c" stopOpacity="0" />
      </radialGradient>
      <linearGradient id="sideWall" gradientUnits="userSpaceOnUse" x1="1196" y1="455" x2="1214" y2="433">
        <stop offset="0" stopColor="#62615e" />
        <stop offset="1" stopColor="#716f6b" />
      </linearGradient>
      <linearGradient id="lip" gradientUnits="userSpaceOnUse" x1="1233" y1="634" x2="1243" y2="652">
        <stop offset="0" stopColor="#acaba8" />
        <stop offset=".5" stopColor="#c1c0bc" />
        <stop offset="1" stopColor="#c0bfbb" />
      </linearGradient>
    </defs>
    <path d="M643 391L1115 778l30 125L672 515z" fill="#82807b" />
    <path d="M1115 778l363-201 29 125-362 201z" fill="#80827b" />
    <path d="M1005 190L643 391l472 387 363-201z" fill="#bcbbb7" />
    <path d="M1052 336L842 461l282 232 218-117z" fill="url(#floor)" />
    <path d="M1052 340L842 461l282 232 218-117z" fill="url(#floorEnd)" />
    <path d="M992 253L749 387l93 74 210-116v-10z" fill="url(#backWall)" />
    <path d="M992 253L749 387l93 74 210-116v-10z" fill="url(#backWallLow)" />
    <path d="M992 254l390 321-40 1-291-241z" fill="url(#sideWall)" />
    <path d="M1342 576l40-1-241 133-17-15z" fill="url(#lip)" />
    <path d="M842 461l210-116" fill="none" stroke="#bdbcb8" strokeOpacity=".6" />
    <path d="M1054 346l284 234" fill="none" stroke="#858481" strokeOpacity=".4" strokeWidth="5" />
    <path d="M1052 337l290 239" fill="none" stroke="#b3b2ae" strokeOpacity=".7" />
    <path d="M643 391l29 124 473 388 362-201-29-125M1115 778l30 125" fill="none" stroke="#d6d5d1" />
    <path d="M1002 221h4v3h-4z" fill="#e8730c" />
  </svg>
);

const ViewCube = () => (
  <svg className="absolute top-8 right-1 h-[110px] w-[100px]" viewBox="1815 170 100 110" role="img" aria-label="View cube">
    <defs>
      <radialGradient id="cubeShadow">
        <stop offset="0" stopColor="#001a3a" stopOpacity=".9" />
        <stop offset="1" stopColor="#001a3a" stopOpacity="0" />
      </radialGradient>
      <linearGradient id="cubeFace" x1="0" y1="0" x2="1" y2="1">
        <stop offset="0" stopColor="#f4f4f4" />
        <stop offset="1" stopColor="#c4c4c4" />
      </linearGradient>
    </defs>
    <ellipse cx="1856" cy="254" rx="40" ry="24" fill="url(#cubeShadow)" />
    <path d="M1819 177l7-7 7 7h-2v6h-10v-6z" fill="#9db8d6" />
    <path d="M1825 178h3v5h-3z" fill="#123f75" />
    <path d="M1859 186l29 17-44 25-25-22z" fill="#e9e9e9" />
    <path d="M1819 206l25 22 10 38-23-26z" fill="#d8d8d8" />
    <path d="M1844 228l44-25 4 39-38 24z" fill="url(#cubeFace)" />
    <path d="M1859 186l29 17 4 39-38 24-23-26-12-34z" fill="none" stroke="#555" strokeWidth=".8" />
    <path d="M1819 206l25 22 44-25M1844 228l10 38" fill="none" stroke="#555" strokeWidth=".8" strokeDasharray="5 2" />
    <path d="M1838 221l8-5 8 4v9l-8 6-6-5z" fill="#b9c6da" fillOpacity=".85" />
    <path d="M1839 224l5 4 9-5M1844 228l2 6" fill="none" stroke="#667" />
    <g fontFamily="Open Sans" fontWeight="700" fill="#444" textAnchor="middle">
      <text fontSize="10" transform="translate(1872 239) rotate(-22) skewX(-10)">BACK</text>
      <text fontSize="9" transform="translate(1852 201) rotate(164) skewX(20)">TOP</text>
      <text fontSize="6" transform="translate(1834 236) rotate(57)">RIGHT</text>
    </g>
    <path d="M1899 250h12v2h-12zM1899 254h12l-6 5z" fill="#9db8d6" stroke="#123f75" strokeWidth=".5" />
  </svg>
);

const navTools: Record<string, ReactNode> = {
  wheel: (
    <g stroke="#444" strokeWidth=".8">
      <path d="M12 1h11v11a11 11 0 1 1-11-11z" fill="#d9dfe6" />
      <circle cx="12" cy="12" r="7" fill="#eef1f4" />
      <circle cx="12" cy="12" r="5" fill="#c7d3e0" />
      <path d="M5 19l3-3M19 19l-3-3" />
    </g>
  ),
  pan: <path d="M8 22c-2-4-5-6-6-9l2-1 3 3L4 6l2-1 3 7-1-9h2l2 8 1-9h2l0 9 3-7 2 1-2 9 3-3 2 1-5 8-1 3z" fill="#f2f4f6" stroke="#444" strokeWidth=".8" />,
  zoom: (
    <g stroke="#444">
      <path d="M14 14l7 7" strokeWidth="3" />
      <circle cx="10" cy="10" r="7" fill="#d9e4ee" />
      <path d="M7 6h4l2 2v6H7z" fill="#fff" />
    </g>
  ),
  orbit: (
    <g fill="none" stroke="#3f5068">
      <ellipse cx="11" cy="13" rx="9" ry="4" />
      <ellipse cx="11" cy="12" rx="4" ry="9" />
      <path d="M16 5h5M18.5 3v5M14 12h4M16 10v4" />
    </g>
  ),
  look: (
    <g stroke="#333">
      <path d="M2 9h20v12H2z" fill="#e9ecef" />
      <path d="M6 12h12v6H6z" fill="#a9b4c4" />
      <path d="M5 8c2-5 6-5 8-3V2l5 4-5 3V7c-2-1-5-1-8 1z" fill="#b9c4d2" />
    </g>
  ),
};

const NavTool = ({ name, label }: { name: string; label: string }) => (
  <button aria-label={label} className="flex items-center justify-center">
    <svg className="size-5" viewBox="0 0 24 24">{navTools[name]}</svg>
  </button>
);

const NavBar = () => (
  <div className="absolute top-[144px] right-px flex h-[200px] w-[34px] flex-col items-center rounded-md border-2 border-[#0a3468] bg-[#7b9cc2] ring-1 ring-[#9cb8da] ring-inset">
    <button aria-label="Close navigation bar" className="mt-[2px] mr-[2px] self-end">
      <svg className="size-[9px]" viewBox="0 0 9 9"><circle cx="4.5" cy="4.5" r="4.5" fill="#40546e" /><path d="M3 3l3 3M6 3L3 6" stroke="#fff" /></svg>
    </button>
    <button aria-label="Steering wheel" className="mt-[9px]">
      <svg className="size-6" viewBox="0 0 24 24">{navTools.wheel}</svg>
    </button>
    <div className="mt-2"><Caret /></div>
    <div className="mt-1 h-px w-[26px] bg-[#44597a]" />
    <div className="mt-1 flex flex-col items-center">
      <NavTool name="pan" label="Pan" />
      <div className="mt-1 flex"><NavTool name="zoom" label="Zoom" /></div>
      <div className="my-1"><Caret /></div>
      <NavTool name="orbit" label="Orbit" />
      <div className="my-1"><Caret /></div>
      <NavTool name="look" label="Look at" />
    </div>
    <button aria-label="Navigation options" className="mt-auto mr-[2px] mb-1 self-end">
      <svg className="size-[9px]" viewBox="0 0 9 9"><circle cx="4.5" cy="4.5" r="4.5" fill="#40546e" /><path d="M2 3h5M2.5 5h4l-2 2z" stroke="#fff" strokeWidth=".6" fill="#fff" /></svg>
    </button>
  </div>
);

const Triad = () => (
  <svg className="absolute bottom-[26px] left-[15px] h-[62px] w-[50px]" viewBox="262 905 50 62" role="img" aria-label="Axes">
    <path d="M301 941l-19 10" stroke="#c01818" />
    <path d="M301 941l-4-16" stroke="#20c020" />
    <path d="M301 941l-12-9" stroke="#1414c8" />
    <path d="M276 953l7-8 5 7-1 3z" fill="#a01010" />
    <path d="M291 926l5-8 6 8-3 4h-5z" fill="#0c8a14" />
    <path d="M284 929l8-2 1 6-5 4z" fill="#06068c" />
    <g fontFamily="Liberation Sans" fontSize="12" textAnchor="middle">
      <text x="294" y="917" fill="#20d060">Y</text>
      <text x="281" y="929" fill="#1030ff" stroke="#1030ff" strokeWidth=".4">Z</text>
      <text x="271" y="961" fill="#d01c2c">X</text>
    </g>
  </svg>
);

const Viewport = () => (
  <main className="relative flex-1 overflow-hidden bg-[#004d99]">
    <Mold />
    <div className="absolute top-[6px] right-px flex gap-2">
      <button aria-label="Minimize document"><svg className="size-3" viewBox="0 0 12 12"><path d="M.5 6.500h11v3H.5z" fill="#fff" stroke="#333" strokeWidth=".7" /></svg></button>
      <button aria-label="Restore document"><svg className="size-3" viewBox="0 0 12 12"><path d="M4 1h7v8H4zM1.500 3.500h7v7h-7z" fill="#fff" stroke="#333" /><path d="M4 6h2v2H4z" fill="#333" /></svg></button>
      <button aria-label="Close document"><svg className="size-3" viewBox="0 0 12 12"><path d="M1 1h3l2 3 2-3h3L8 6l3 5H8L6 8l-2 3H1l3-5z" fill="#fff" stroke="#333" strokeWidth=".7" /></svg></button>
    </div>
    <ViewCube />
    <NavBar />
    <Triad />
  </main>
);

const layouts: [string, string][] = [
  ['Cascade', 'M1.5 2.5h10v6h-10zM3.5 5.5h10v6h-10zM6.5 8.5h10v6h-10z'],
  ['Arrange', 'M1.5 3.5h6v4h-6zM10.5 3.5h6v4h-6zM1.5 10.5h6v4h-6zM10.5 10.5h6v4h-6z'],
  ['Tile horizontally', 'M1.5 3.5h15v4h-15zM1.5 10.5h15v4h-15z'],
  ['Tile vertically', 'M1.5 3.5h6v11h-6zM10.5 3.5h6v11h-6z'],
];

const docTabs = [
  'My Home', 'Rip1.ipt', 'Rip3.ipt', 'Rip2.ipt', 'unfold and refold.ipt', 'face.ipt', 'Part2', 'Mabati-contour f...ipt',
  'Part3', 'Lofted flange.ipt', 'hole, corner, cha...ipt', 'flange.ipt', 'Cut.ipt', 'Part4', 'Part5', 'Part6',
];

const DocumentTabs = () => (
  <nav className="flex h-[22px] items-stretch border-t-2 border-[#f0f0f0] bg-linear-to-b from-[#d8d8d8] to-[#b4b4b4] text-[11px] text-[#111]">
    {layouts.map(([label, d]) => (
      <button key={label} aria-label={label} className="flex w-5 shrink-0 items-center justify-center border border-[#555] bg-[#e6e6e6]">
        <svg className="size-[18px] shrink-0" viewBox="0 0 18 18"><path d={d} fill="#f4f4f4" stroke="#333" /></svg>
      </button>
    ))}
    <button aria-label="Show open documents" className="flex w-5 shrink-0 items-start justify-center border border-[#555] bg-[#e6e6e6] pt-1">
      <span className="flex rotate-180"><Caret className="text-[#222]" /></span>
    </button>
    {docTabs.map((tab) => (
      <button key={tab} className="mb-[2px] shrink-0 rounded-b-[5px] border border-l-0 border-[#6e6e6e] bg-linear-to-b from-[#dedede] to-[#bdbdbd] px-[10px] leading-4 whitespace-nowrap">
        {tab}
      </button>
    ))}
    <button className="mb-[2px] flex shrink-0 gap-[6px] rounded-b-[5px] border border-l-0 border-[#6e6e6e] bg-white px-[10px] leading-4 whitespace-nowrap">
      skate board mold.ipt
      <svg className="mt-[3px] size-[7px]" viewBox="0 0 7 7"><path d="M1 1l5 5M6 1L1 6" stroke="#777" strokeWidth="1.600" /></svg>
    </button>
  </nav>
);

const StatusBar = () => (
  <footer className="flex h-[25px] items-stretch bg-linear-to-b from-white to-[#b2b2b2] text-[11px] leading-[27px] text-black">
    <span className="flex-1 pl-px">Ready</span>
    <span className="my-[2px] w-10 border-l border-[#c4c4c4] pl-2 leading-[23px]">1</span>
    <span className="my-[2px] w-[39px] border-l border-[#c4c4c4] pl-2 leading-[23px]">16</span>
  </footer>
);

/* 36px taskbar drawings */
const Office = ({ letter, dark, light }: { letter: string; dark: string; light: string }) => (
  <g>
    <path d="M17 7h15v23H17z" fill="#fff" stroke={light} />
    <path d="M20 11h9M20 15h9M20 19h9M20 23h9M20 27h9" stroke={light} strokeWidth="1.5" />
    <path d="M3 6l18-3v31L3 30z" fill={dark} />
    <text x="11" y="24" textAnchor="middle" fontSize="15" fontWeight="700" fill="#fff" fontFamily="Open Sans">{letter}</text>
  </g>
);

const taskIcons: Record<string, ReactNode> = {
  ie: (
    <g fill="none">
      <path d="M28 21H10M28 21c0-16-19-15-19 0 0 12 15 13 18 4" stroke="#46b6ee" strokeWidth="5" />
      <path d="M5 32C-2 30 12 6 27 4c7-1 6 5 2 10" stroke="#f2c62c" strokeWidth="2.5" />
    </g>
  ),
  explorer: (
    <g>
      <path d="M3 6l10-2 3 3h16v24H3z" fill="#f1dc92" stroke="#b99a45" />
      <path d="M6 5h6v3H6z" fill="#3da04a" /><path d="M14 7h7v3h-7z" fill="#c8402c" /><path d="M22 9h8v3h-8z" fill="#3d7fc8" />
      <path d="M3 11h29v20H3z" fill="#f9eab2" stroke="#c9ab57" />
      <path d="M7 33V24c0-3 2-4 4-4h15c2 0 4 1 4 4v9h-5v-7H12v7z" fill="#8fcdf0" stroke="#3b86b8" />
    </g>
  ),
  wmp: (
    <g>
      <path d="M12 6h20v24H12z" fill="#7eb7dd" stroke="#cfe4f2" />
      <path d="M8 6h20v24H8z" fill="#8fc2e4" stroke="#cfe4f2" />
      <path d="M4 6h21v24H4z" fill="#a9d2ec" stroke="#e2f0f8" />
      <circle cx="15" cy="18" r="9" fill="#ef7d1e" stroke="#fff" />
      <path d="M12 12l9 6-9 6z" fill="#fff" />
    </g>
  ),
  excel: <Office letter="X" dark="#1e7145" light="#2f8a58" />,
  ppt: (
    <g>
      <path d="M17 7h15v23H17z" fill="#fff" stroke="#dc5c3c" />
      <circle cx="25" cy="14" r="4.5" fill="#dc5c3c" />
      <path d="M25 14V9M25 14h5" stroke="#fff" />
      <path d="M20 23h10M20 27h10" stroke="#dc5c3c" strokeWidth="1.5" />
      <path d="M3 6l18-3v31L3 30z" fill="#d24726" />
      <text x="11" y="24" textAnchor="middle" fontSize="15" fontWeight="700" fill="#fff" fontFamily="Open Sans">P</text>
    </g>
  ),
  word: <Office letter="W" dark="#2a5699" light="#3a68ae" />,
  chrome: (
    <g>
      <path d="M18 18L4.5 9.5A16 16 0 0 1 32.5 11z" fill="#db4437" />
      <path d="M18 18L32.5 11A16 16 0 0 1 17 34z" fill="#f4c20d" />
      <path d="M18 18l-1 16A16 16 0 0 1 4.5 9.5z" fill="#3da858" />
      <path d="M18 11h14.5l-6 8z" fill="#f4c20d" />
      <circle cx="18" cy="18" r="7.5" fill="#fff" />
      <circle cx="18" cy="18" r="6" fill="#4285f4" />
    </g>
  ),
  tools: (
    <g>
      <path d="M3 3h30v30H3z" fill="#a4a6a6" stroke="#666" />
      <path d="M11 6h5l3 5-3 5h-5l-3-5z" fill="none" stroke="#fff" strokeWidth="2.5" />
      <path d="M23 12c0 5 6 5 6 0M26 16v3" fill="none" stroke="#222" strokeWidth="2.5" />
      <circle cx="11" cy="25" r="3" fill="none" stroke="#222" strokeWidth="2" /><path d="M14 26h6" stroke="#222" strokeWidth="2" />
      <path d="M20 20l6-3 7 3c0 7-3 12-7 14-4-2-6-7-6-14z" fill="#2f72c4" />
      <path d="M26 17l7 3v6h-7zM26 26v8c-3-2-5-4-6-8z" fill="#f4c62c" />
    </g>
  ),
  eagle: (
    <g>
      <path d="M2 2h32v32H2z" fill="#fff" />
      <path d="M18 3c-10 0-14 8-9 15l5 4c-3-7 0-12 4-13l-3 4c2 0 4-1 4-4z" fill="#d01c34" />
      <text x="24" y="21" textAnchor="middle" fontSize="11" fill="#8a1c2c" fontFamily="Open Sans">CS</text>
      <text x="18" y="32" textAnchor="middle" fontSize="7" fontWeight="700" fill="#111" fontFamily="Open Sans">EAGLE</text>
    </g>
  ),
  snip: (
    <g>
      <path d="M5 5h26v25H5z" fill="#8ccaf2" stroke="#eef6fb" />
      <path d="M6 13c6-4 12-2 24-5v8H6z" fill="#d8eefa" />
      <path d="M6 20c6-5 10 2 14-2s8-3 11 0v4H6z" fill="#2d6b4a" />
      <path d="M6 21h25v9H6z" fill="#3f86b4" />
      <path d="M4 10V4h6M26 4h6v6M4 25v6h6M26 31h6v-6" fill="none" stroke="#5fb4ec" strokeWidth="2.5" />
    </g>
  ),
  inventor: (
    <g>
      <path d="M2 1h32v34H2z" fill="#fdebd2" />
      <path d="M2 1h10L8 35H2z" fill="#f6c38c" />
      <path d="M10 4h16v6l-5 2v6l5 2v6H10v-6l5-2v-6l-5-2z" fill="#d06c20" />
      <path d="M15 12l6-2v10l-6 2z" fill="#8f4310" />
      <text x="26" y="34" textAnchor="middle" fontSize="7" fontWeight="700" fill="#333" fontFamily="Open Sans">PRO</text>
    </g>
  ),
  paint: (
    <g>
      <path d="M4 20C3 11 14 5 23 9c8 4 8 14 2 17-4 1-6-2-8 1-1 4-12 2-13-7z" fill="#bfe0f2" stroke="#5d93b8" />
      <circle cx="11" cy="15" r="2.5" fill="#47a04c" /><circle cx="17" cy="12" r="2.5" fill="#e6b62c" /><circle cx="9" cy="21" r="2.5" fill="#d2402c" /><circle cx="17" cy="22" r="2.5" fill="#2c5fb4" />
      <path d="M29 9L20 33" stroke="#c07a2c" strokeWidth="3" />
      <path d="M28 9c0-4 2-6 5-7 1 3 0 7-2 9z" fill="#c9a06a" />
    </g>
  ),
};

const tasks: { icon: string; label: string; state?: 'open' | 'stack' | 'active' }[] = [
  { icon: 'ie', label: 'Internet Explorer' },
  { icon: 'explorer', label: 'Explorer', state: 'stack' },
  { icon: 'wmp', label: 'Media Player' },
  { icon: 'excel', label: 'Excel' },
  { icon: 'ppt', label: 'PowerPoint' },
  { icon: 'word', label: 'Word', state: 'stack' },
  { icon: 'chrome', label: 'Chrome', state: 'open' },
  { icon: 'tools', label: 'Configuration' },
  { icon: 'eagle', label: 'Eagle' },
  { icon: 'snip', label: 'Pictures', state: 'open' },
  { icon: 'inventor', label: 'Inventor', state: 'active' },
  { icon: 'paint', label: 'Paint', state: 'open' },
];

const taskStyles = {
  open: 'flex-1 rounded-xs border border-[#9fb2d4] bg-linear-to-br from-white/50 via-white/15 to-white/25',
  stack: 'flex-1 rounded-xs border border-[#9fb2d4] bg-linear-to-br from-white/50 via-white/15 to-white/25',
  active: 'flex-1 rounded-xs border border-[#dfe7f4] bg-linear-to-br from-white/90 via-white/50 to-white/70',
};

const Taskbar = () => (
  <footer className="flex h-10 items-stretch border-t border-[#14284f] bg-linear-to-r from-[#1c3873] via-[#22438c] to-[#2a5aa4] text-[11px] text-white">
    <button aria-label="Start" className="flex w-[57px] items-center pl-2">
      <svg className="size-[38px]" viewBox="0 0 38 38">
        <defs>
          <radialGradient id="orb" cx=".5" cy=".9" r=".9">
            <stop offset="0" stopColor="#58d0f4" />
            <stop offset=".5" stopColor="#1d5c94" />
            <stop offset="1" stopColor="#8fa9bf" />
          </radialGradient>
        </defs>
        <circle cx="19" cy="19" r="18" fill="url(#orb)" stroke="#122b55" />
        <path d="M10 10c3-2 5-2 8 0l-2 8c-3-2-5-2-8 0z" fill="#ee5a28" />
        <path d="M20 11c3 2 5 2 9 0l-2 8c-3 2-6 2-9 0z" fill="#86c440" />
        <path d="M8 20c3-2 5-2 8 0l-2 8c-3-2-5-2-8 0z" fill="#3f9be6" />
        <path d="M18 21c3 2 5 2 9 0l-2 8c-3 2-6 2-9 0z" fill="#fbc91c" />
      </svg>
    </button>
    {tasks.map(({ icon, label, state }) => (
      <button key={icon} aria-label={label} className="flex w-[62px] shrink-0 pr-px pl-[2px]">
        <span className={`flex h-full items-center justify-center ${state ? taskStyles[state] : 'flex-1'}`}>
          <svg className="size-9" viewBox="0 0 36 36">{taskIcons[icon]}</svg>
        </span>
        {state === 'stack' && <span className="h-full w-[3px] border-r border-[#7f97c4]" />}
        {state === 'stack' && <span className="h-full w-[3px] border-r border-[#7f97c4]" />}
      </button>
    ))}
    <div className="ml-auto flex items-center bg-[#1f4278]/60 pl-5">
      <button aria-label="Show hidden icons" className="flex w-6 justify-center">
        <span className="rotate-180"><Caret className="text-white" /></span>
      </button>
      <ToolButton icon="flag" label="Action Center" />
      <ToolButton icon="network" label="Network" className="w-6" />
      <ToolButton icon="sound" label="Volume" className="w-6" />
      <div className="w-[74px] text-center leading-[17px]">
        <div>5:01 PM</div>
        <div>7/11/2016</div>
      </div>
      <button aria-label="Show desktop" className="h-full w-[14px] border border-[#8ea6cc] bg-linear-to-b from-white/30 to-white/10" />
    </div>
  </footer>
);

export default function App() {
  return (
    <div className="relative flex min-h-screen flex-col bg-[#f0f0f0] font-['Open_Sans',sans-serif]">
      <TitleBar />
      <RibbonTabs />
      <AppButton />
      <Ribbon />
      <div className="flex flex-1 items-stretch">
        <ModelBrowser />
        <div className="flex min-w-0 flex-1 flex-col border-l border-[#8a8a8a]">
          <div className="flex flex-1 border-t border-r-2 border-t-[#6a7f99] border-r-[#e6e6e6]">
            <Viewport />
          </div>
          <DocumentTabs />
        </div>
      </div>
      <StatusBar />
      <Taskbar />
    </div>
  );
}
